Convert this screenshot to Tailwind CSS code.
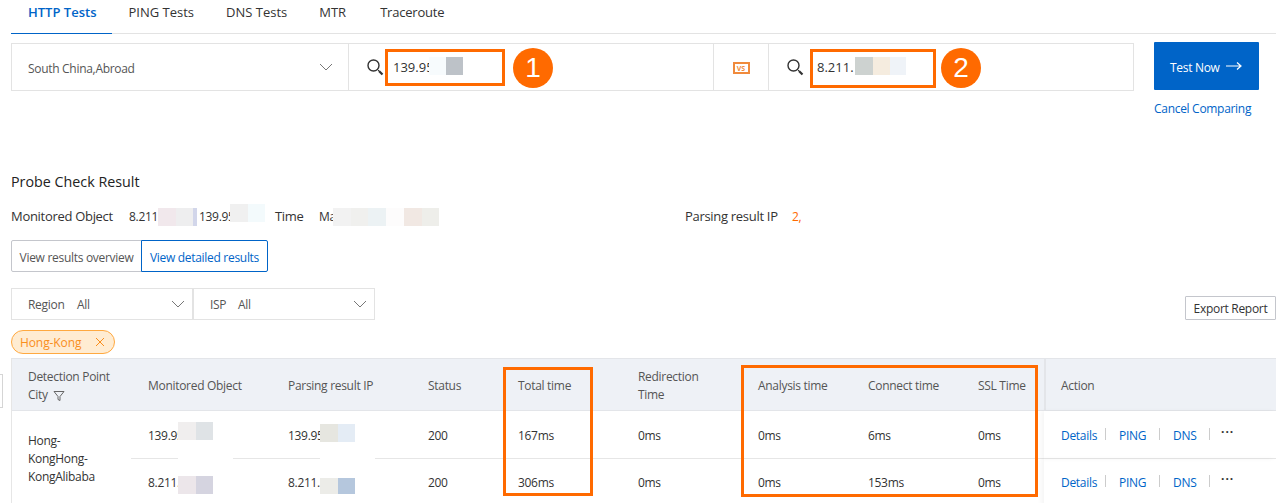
<!DOCTYPE html>
<html lang="en">
<head>
    <meta charset="UTF-8">
    <title>Probe Check Result</title>
    <script src="https://cdn.jsdelivr.net/npm/@tailwindcss/browser@4"></script>
</head>
<body class="relative w-[1283px] h-[503px] overflow-hidden bg-white text-xs tracking-[-0.3px] text-[#333] font-['Open_Sans',sans-serif]">

    <!-- Tabs -->
    <div class="flex h-[34px] ml-[11px] mr-[7px] border-b border-[#e3e3e3] text-[13px] tracking-normal">
        <div class="h-[34px] pl-[17px] pr-4 pt-1 font-semibold text-[#0064c8] border-b border-[#0064c8]">HTTP Tests</div>
        <div class="px-4 pt-1">PING Tests</div>
        <div class="px-4 pt-1">DNS Tests</div>
        <div class="pl-4 pr-[18px] pt-1">MTR</div>
        <div class="px-4 pt-1 tracking-[-0.2px]">Traceroute</div>
    </div>

    <!-- Search bar -->
    <div class="flex items-start ml-[11px] mt-2">
        <div class="flex mt-px w-[1123px] h-12 border border-[#e3e3e3]">
            <div class="flex items-center justify-between w-[337px] pl-4 pr-[15px] border-r border-[#e3e3e3] text-[#555]">
                <span class="pt-[3px]">South China,Abroad</span>
                <svg class="w-3.5 h-3.5" viewBox="0 0 14 14" fill="none" stroke="#777" stroke-width="1"><path d="M1 4l6 6 6-6"/></svg>
            </div>
            <div class="flex items-center w-[365px] pl-[18px] border-r border-[#e3e3e3] text-[13px] tracking-normal">
                <svg class="w-[17px] h-[17px]" viewBox="0 0 17 17" fill="none" stroke="#333"><circle cx="6.5" cy="6.5" r="5.5" stroke-width="1.4"/><path d="M10.5 10.5l1.5 1.5" stroke-width="1"/><path d="M12 12l3.5 3.5" stroke-width="2.2"/></svg>
                <span class="ml-[9px] w-[36px] pt-0.5 whitespace-nowrap">139.95</span><span class="relative inline-block w-[17px] h-[18px] bg-[#f7fbfd] -mt-0.5"></span><span class="relative inline-block w-[17px] h-[18px] bg-[#bdc2c8] -mt-0.5"></span>
            </div>
            <div class="flex items-center justify-center w-[55px] border-r border-[#e3e3e3]">
                <span class="flex items-center justify-center w-[17px] h-[12px] mt-0.5 border-2 border-[#f08a3c] text-[7px] font-bold tracking-normal text-[#f08a3c] leading-none">VS</span>
            </div>
            <div class="flex items-center flex-1 pl-[18px] text-[13px] tracking-normal">
                <svg class="w-[17px] h-[17px]" viewBox="0 0 17 17" fill="none" stroke="#333"><circle cx="6.5" cy="6.5" r="5.5" stroke-width="1.4"/><path d="M10.5 10.5l1.5 1.5" stroke-width="1"/><path d="M12 12l3.5 3.5" stroke-width="2.2"/></svg>
                <span class="ml-[13px] pt-0.5">8.211.</span><span class="inline-block w-[18px] h-[18px] bg-[#cdd2d0] ml-px -mt-0.5"></span><span class="inline-block w-[17px] h-[18px] bg-[#f5ecdf] -mt-0.5"></span><span class="inline-block w-4 h-[18px] bg-[#eff3f8] -mt-0.5"></span>
            </div>
        </div>
        <div class="ml-5 w-[105px]">
            <div class="flex items-center justify-between h-12 pl-4 pr-[17px] bg-[#0064c8] text-white rounded-[1px]">
                <span class="pt-[3px]">Test Now</span>
                <svg class="w-4 h-3" viewBox="0 0 16 12" fill="none" stroke="#fff" stroke-width="1.2"><path d="M0 6h15M11 2.5L15 6l-4 3.5"/></svg>
            </div>
            <div class="mt-[10px] text-[#0064c8] whitespace-nowrap leading-[18px]">Cancel Comparing</div>
        </div>
    </div>

    <!-- Result summary -->
    <h2 class="ml-[11px] mt-[54px] text-[14.3px] tracking-normal leading-[20px] text-[#222]">Probe Check Result</h2>
    <div class="flex items-center h-[18px] ml-[11px] mt-[16px] text-[13px]">
        <span class="w-[118px]">Monitored Object</span>
        <span class="text-xs w-[29px]">8.211</span>
        <span class="w-[18px] h-[18px] bg-[#f1e8ec]"></span><span class="w-[17px] h-[18px] bg-[#eeeeef]"></span><span class="w-1 h-[18px] bg-[#d2d6ea]"></span>
        <span class="text-xs ml-[2px] w-[31px] whitespace-nowrap">139.95</span>
        <span class="relative w-[18px] h-[18px] bg-[#f0f0f0] -mt-2"></span><span class="w-[17px] h-[18px] bg-[#f3fafc] -mt-2"></span>
        <span class="ml-[10px] w-11">Time</span>
        <span class="text-xs w-[14px] whitespace-nowrap">Ma</span>
        <span class="relative w-[18px] h-[18px] bg-[#f2f2f2]"></span><span class="w-[17px] h-[18px] bg-[#f0f0ee]"></span><span class="w-[18px] h-[18px] bg-[#ecf2f4]"></span><span class="w-[18px] h-[18px] bg-[#fdfcfc]"></span><span class="w-[18px] h-[18px] bg-[#f1e8e3]"></span><span class="w-[17px] h-[18px] bg-[#eeeeea]"></span>
        <span class="ml-[246px] w-[107px]">Parsing result IP</span>
        <span class="text-xs text-[#ff6a00]">2,</span>
    </div>

    <!-- View switch -->
    <div class="flex ml-[11px] mt-[14px] h-8">
        <div class="flex items-center justify-center w-[131px] pt-[3px] border border-[#c4c6cc] rounded-l-[2px] text-[#555]">View results overview</div>
        <div class="flex items-center justify-center w-[127px] pt-[3px] -ml-px border border-[#0064c8] rounded-r-[2px] text-[#0064c8]">View detailed results</div>
    </div>

    <!-- Filters -->
    <div class="flex justify-between items-end ml-[11px] mr-[7px] mt-4 h-8">
        <div class="flex">
            <div class="flex items-center w-[182px] h-8 pl-4 pr-[7px] border border-[#e3e3e3] text-[#555]">
                <span class="w-[49px] pt-0.5">Region</span><span class="flex-1 pt-0.5">All</span>
                <svg class="w-3.5 h-3.5" viewBox="0 0 14 14" fill="none" stroke="#777"><path d="M1 4l6 6 6-6"/></svg>
            </div>
            <div class="flex items-center w-[182px] h-8 pl-4 pr-[7px] border border-[#e3e3e3] text-[#555]">
                <span class="w-[28px] pt-0.5">ISP</span><span class="flex-1 pt-0.5">All</span>
                <svg class="w-3.5 h-3.5" viewBox="0 0 14 14" fill="none" stroke="#777"><path d="M1 4l6 6 6-6"/></svg>
            </div>
        </div>
        <div class="flex items-center justify-center w-[91px] h-6 pt-0.5 border border-[#c4c6cc] rounded-[1px]">Export Report</div>
    </div>

    <!-- Active filter tag -->
    <div class="flex items-center justify-between w-[104px] h-6 ml-[11px] mt-[10px] pl-2 pr-[9px] rounded-full border border-[#ffa940] bg-[#ffecd2] text-[#f98e1d] tracking-[-0.1px]">
        <span class="pt-0.5">Hong-Kong</span>
        <svg class="w-[10px] h-[10px]" viewBox="0 0 10 10" stroke="#f98e1d"><path d="M1 1l8 8M9 1l-8 8"/></svg>
    </div>

    <!-- Result table -->
    <table class="table-fixed w-[1265px] ml-[11px] mt-[4px] border-separate border-spacing-0 border-l border-[#e6e6e6]">
        <colgroup>
            <col class="w-[119px]"><col class="w-[140px]"><col class="w-[140px]"><col class="w-[90px]"><col class="w-[120px]"><col class="w-[120px]"><col class="w-[110px]"><col class="w-[110px]"><col class="w-[83px]"><col>
        </colgroup>
        <thead>
            <tr class="h-[53px] bg-[#eef1f6] text-[#555] leading-[18px] text-left">
                <th class="pl-4 pt-[3px] font-normal border-t border-b border-[#e3e5e9]">Detection Point<br>City
                    <svg class="inline w-3 h-3 ml-0.5" viewBox="0 0 12 12" fill="none" stroke="#666"><path d="M1 1.5h10L7 6.5v4l-2-1v-3z"/></svg>
                </th>
                <th class="pl-[17px] pt-[3px] font-normal border-t border-b border-[#e3e5e9]">Monitored Object</th>
                <th class="pl-[17px] pt-[3px] font-normal border-t border-b border-[#e3e5e9]">Parsing result IP</th>
                <th class="pl-[17px] pt-[3px] font-normal border-t border-b border-[#e3e5e9]">Status</th>
                <th class="pl-[17px] pt-[3px] font-normal border-t border-b border-[#e3e5e9]">Total time</th>
                <th class="pl-[17px] pt-[3px] font-normal border-t border-b border-[#e3e5e9]">Redirection<br>Time</th>
                <th class="pl-[17px] pt-[3px] font-normal border-t border-b border-[#e3e5e9]">Analysis time</th>
                <th class="pl-[17px] pt-[3px] font-normal border-t border-b border-[#e3e5e9]">Connect time</th>
                <th class="pl-[17px] pt-[3px] font-normal border-t border-b border-[#e3e5e9] whitespace-nowrap">SSL Time</th>
                <th class="pl-[15px] pt-[3px] font-normal border-t border-b border-l-2 border-[#e3e5e9]">Action</th>
            </tr>
        </thead>
        <tbody>
            <tr class="h-[48px]">
                <td rowspan="2" class="pl-4 leading-[18px]">Hong-<br>KongHong-<br>KongAlibaba</td>
                <td class="pl-[17px] pt-[3px] border-b border-[#e6e6e6]"><div class="flex items-center"><span class="w-[30px] whitespace-nowrap">139.95</span><span class="relative w-[18px] h-[18px] bg-[#f0eeee] -mt-[10px]"></span><span class="w-[17px] h-[18px] bg-[#dfe3e6] -mt-[10px]"></span></div></td>
                <td class="pl-[17px] pt-[3px] border-b border-[#e6e6e6]"><div class="flex items-center"><span class="w-8 whitespace-nowrap">139.95</span><span class="relative w-[18px] h-[18px] bg-[#e6e6e0] -mt-1.5"></span><span class="w-[17px] h-[18px] bg-[#e4ecf5] -mt-1.5"></span></div></td>
                <td class="pl-[17px] pt-[3px] border-b border-[#e6e6e6]">200</td>
                <td class="pl-[17px] pt-[3px] border-b border-[#e6e6e6]">167ms</td>
                <td class="pl-[17px] pt-[3px] border-b border-[#e6e6e6]">0ms</td>
                <td class="pl-[17px] pt-[3px] border-b border-[#e6e6e6]">0ms</td>
                <td class="pl-[17px] pt-[3px] border-b border-[#e6e6e6]">6ms</td>
                <td class="pl-[17px] pt-[3px] border-b border-[#e6e6e6]">0ms</td>
                <td class="pl-[17px] pt-[3px] border-b border-[#e6e6e6] shadow-[-3px_0_4px_rgba(0,0,0,0.04)]">
                    <div class="flex items-center text-[#0064c8]">
                        <span class="w-[44px]">Details</span><span class="w-px h-3 bg-[#ccc] mr-[13px] -mt-1"></span><span class="w-[40px]">PING</span><span class="w-px h-3 bg-[#ccc] mr-[13px] -mt-1"></span><span class="w-[36px]">DNS</span><span class="w-px h-3 bg-[#ccc] mr-[11px] -mt-1"></span><span class="text-[#333] font-bold leading-none -mt-2 tracking-[1px]">···</span>
                    </div>
                </td>
            </tr>
            <tr class="h-[47px]">
                <td class="pl-[17px]"><div class="flex items-center"><span class="w-[30px] whitespace-nowrap">8.211.</span><span class="relative w-[18px] h-[18px] bg-[#ece6ea] mt-1"></span><span class="w-[17px] h-[18px] bg-[#d5d4e0] mt-1"></span></div></td>
                <td class="pl-[17px]"><div class="flex items-center"><span class="w-8 whitespace-nowrap">8.211.</span><span class="relative w-[18px] h-4 bg-[#ecece8] mt-1.5"></span><span class="w-[17px] h-4 bg-[#b5c7dd] mt-1.5"></span></div></td>
                <td class="pl-[17px]">200</td>
                <td class="pl-[17px]">306ms</td>
                <td class="pl-[17px]">0ms</td>
                <td class="pl-[17px]">0ms</td>
                <td class="pl-[17px]">153ms</td>
                <td class="pl-[17px]">0ms</td>
                <td class="pl-[17px] shadow-[-3px_0_4px_rgba(0,0,0,0.04)]">
                    <div class="flex items-center text-[#0064c8]">
                        <span class="w-[44px]">Details</span><span class="w-px h-3 bg-[#ccc] mr-[13px] -mt-1"></span><span class="w-[40px]">PING</span><span class="w-px h-3 bg-[#ccc] mr-[13px] -mt-1"></span><span class="w-[36px]">DNS</span><span class="w-px h-3 bg-[#ccc] mr-[11px] -mt-1"></span><span class="text-[#333] font-bold leading-none -mt-2 tracking-[1px]">···</span>
                    </div>
                </td>
            </tr>
        </tbody>
    </table>

    <!-- Collapsed side handle -->
    <div class="absolute left-0 top-[374px] w-[3px] h-[34px] bg-white border border-l-0 border-[#d5d5d5]"></div>

    <!-- White blur patches over the row line -->
    <div class="absolute left-[178px] top-[456px] w-[55px] h-1 bg-white"></div>
    <div class="absolute left-[320px] top-[456px] w-[55px] h-1 bg-white"></div>

    <!-- Orange annotations -->
    <div class="absolute left-[385px] top-[49px] w-[120px] h-[37px] border-[3px] border-[#ff6a00]"></div>
    <div class="absolute left-[513px] top-[48px] flex items-center justify-center w-10 h-10 rounded-full bg-[#ff6a00] text-white text-[28px] font-['Liberation_Sans',sans-serif]">1</div>
    <div class="absolute left-[810px] top-[49px] w-[126px] h-[39px] border-[3px] border-[#ff6a00]"></div>
    <div class="absolute left-[941px] top-[48px] flex items-center justify-center w-10 h-10 rounded-full bg-[#ff6a00] text-white text-[28px] font-['Liberation_Sans',sans-serif]">2</div>
    <div class="absolute left-[503px] top-[367px] w-[90px] h-[129px] border-[3px] border-[#ff6a00]"></div>
    <div class="absolute left-[741px] top-[365px] w-[297px] h-[132px] border-[3px] border-[#ff6a00]"></div>
</body>
</html>
